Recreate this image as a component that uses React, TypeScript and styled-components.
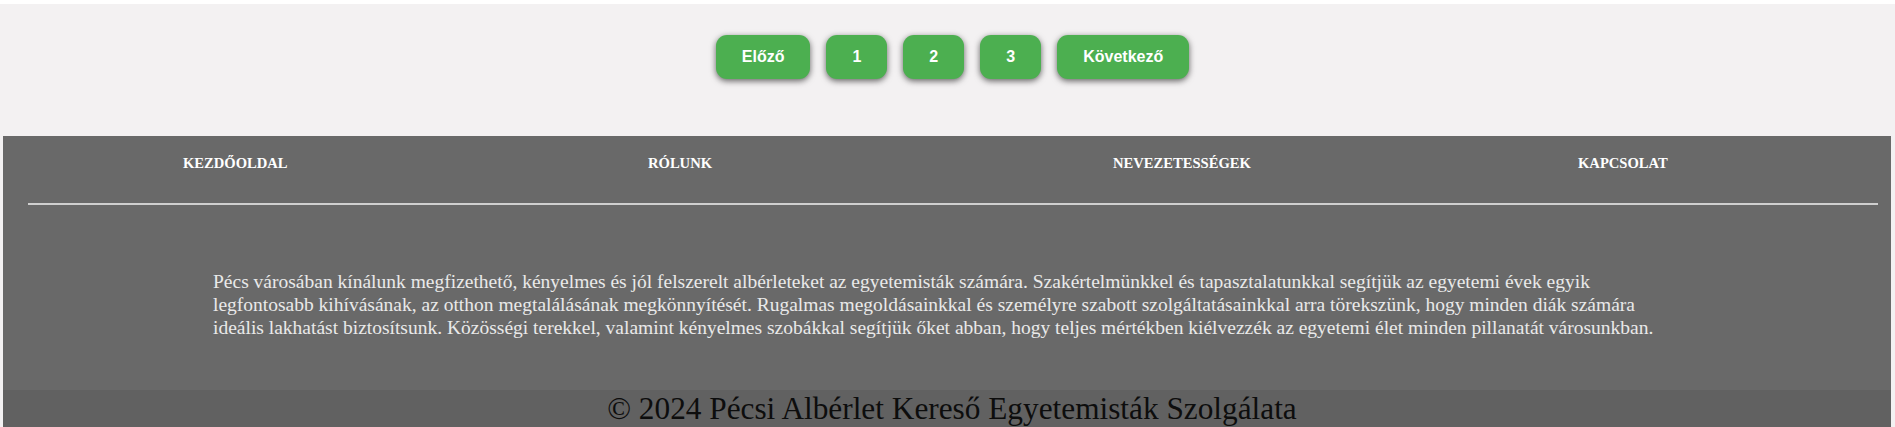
import React from "react";
import styled, { createGlobalStyle } from "styled-components";

const GlobalStyle = createGlobalStyle`
  html, body {
    margin: 0;
    padding: 0;
    background: #f3f1f2;
    font-family: "Liberation Serif", "Times New Roman", serif;
  }
  body {
    overflow: hidden;
  }
`;

const Page = styled.div`
  display: flex;
  flex-direction: column;
  border-top: 4px solid #ffffff;
`;

const Pagination = styled.nav`
  display: flex;
  justify-content: center;
  align-items: center;
  gap: 16px;
  padding: 31px 0 57px 10px;
`;

const PageButton = styled.button`
  font-family: "Liberation Sans", Arial, sans-serif;
  font-size: 16px;
  font-weight: bold;
  line-height: 18px;
  color: #ffffff;
  background: #4caf50;
  border: none;
  border-radius: 11px;
  padding: 13px 26px;
  box-shadow: 0 2px 6px rgba(0, 0, 0, 0.6);
  cursor: pointer;
`;

const Footer = styled.footer`
  margin: 0 4px 0 3px;
  background: #696969;
  display: flex;
  flex-direction: column;
`;

const FooterNav = styled.ul`
  list-style: none;
  margin: 0;
  padding: 19px 0 0 180px;
  display: grid;
  grid-template-columns: 465px 465px 465px auto;
`;

const NavItem = styled.li`
  font-family: "Liberation Serif", "Times New Roman", serif;
  font-size: 14.6px;
  font-weight: bold;
  color: #ffffff;
  text-transform: uppercase;
  line-height: 17px;
`;

const Divider = styled.hr`
  border: none;
  height: 2px;
  background: #cfcfcf;
  margin: 31px 13px 0 25px;
`;

const About = styled.p`
  margin: 65px 0 0 210px;
  width: 1466px;
  font-family: "Liberation Serif", "Times New Roman", serif;
  font-size: 19.5px;
  line-height: 23px;
  color: #e9e9e9;
`;

const Copyright = styled.div`
  margin-top: 51px;
  background: #616161;
  text-align: center;
  padding: 1px 0 4px 10px;
  font-family: "Liberation Serif", "Times New Roman", serif;
  font-size: 31.3px;
  line-height: 36px;
  color: #0d0d0d;
`;

const pages = ["1", "2", "3"];
const links = ["Kezdőoldal", "Rólunk", "Nevezetességek", "Kapcsolat"];

export default function App() {
  return (
    <>
      <GlobalStyle />
      <Page>
        <Pagination>
          <PageButton>Előző</PageButton>
          {pages.map((p) => (
            <PageButton key={p}>{p}</PageButton>
          ))}
          <PageButton>Következő</PageButton>
        </Pagination>
        <Footer>
          <FooterNav>
            {links.map((l) => (
              <NavItem key={l}>{l}</NavItem>
            ))}
          </FooterNav>
          <Divider />
          <About>
            Pécs városában kínálunk megfizethető, kényelmes és jól felszerelt albérleteket az egyetemisták
            számára. Szakértelmünkkel és tapasztalatunkkal segítjük az egyetemi évek egyik legfontosabb
            kihívásának, az otthon megtalálásának megkönnyítését. Rugalmas megoldásainkkal és személyre
            szabott szolgáltatásainkkal arra törekszünk, hogy minden diák számára ideális lakhatást
            biztosítsunk. Közösségi terekkel, valamint kényelmes szobákkal segítjük őket abban, hogy teljes
            mértékben kiélvezzék az egyetemi élet minden pillanatát városunkban.
          </About>
          <Copyright>© 2024 Pécsi Albérlet Kereső Egyetemisták Szolgálata</Copyright>
        </Footer>
      </Page>
    </>
  );
}
